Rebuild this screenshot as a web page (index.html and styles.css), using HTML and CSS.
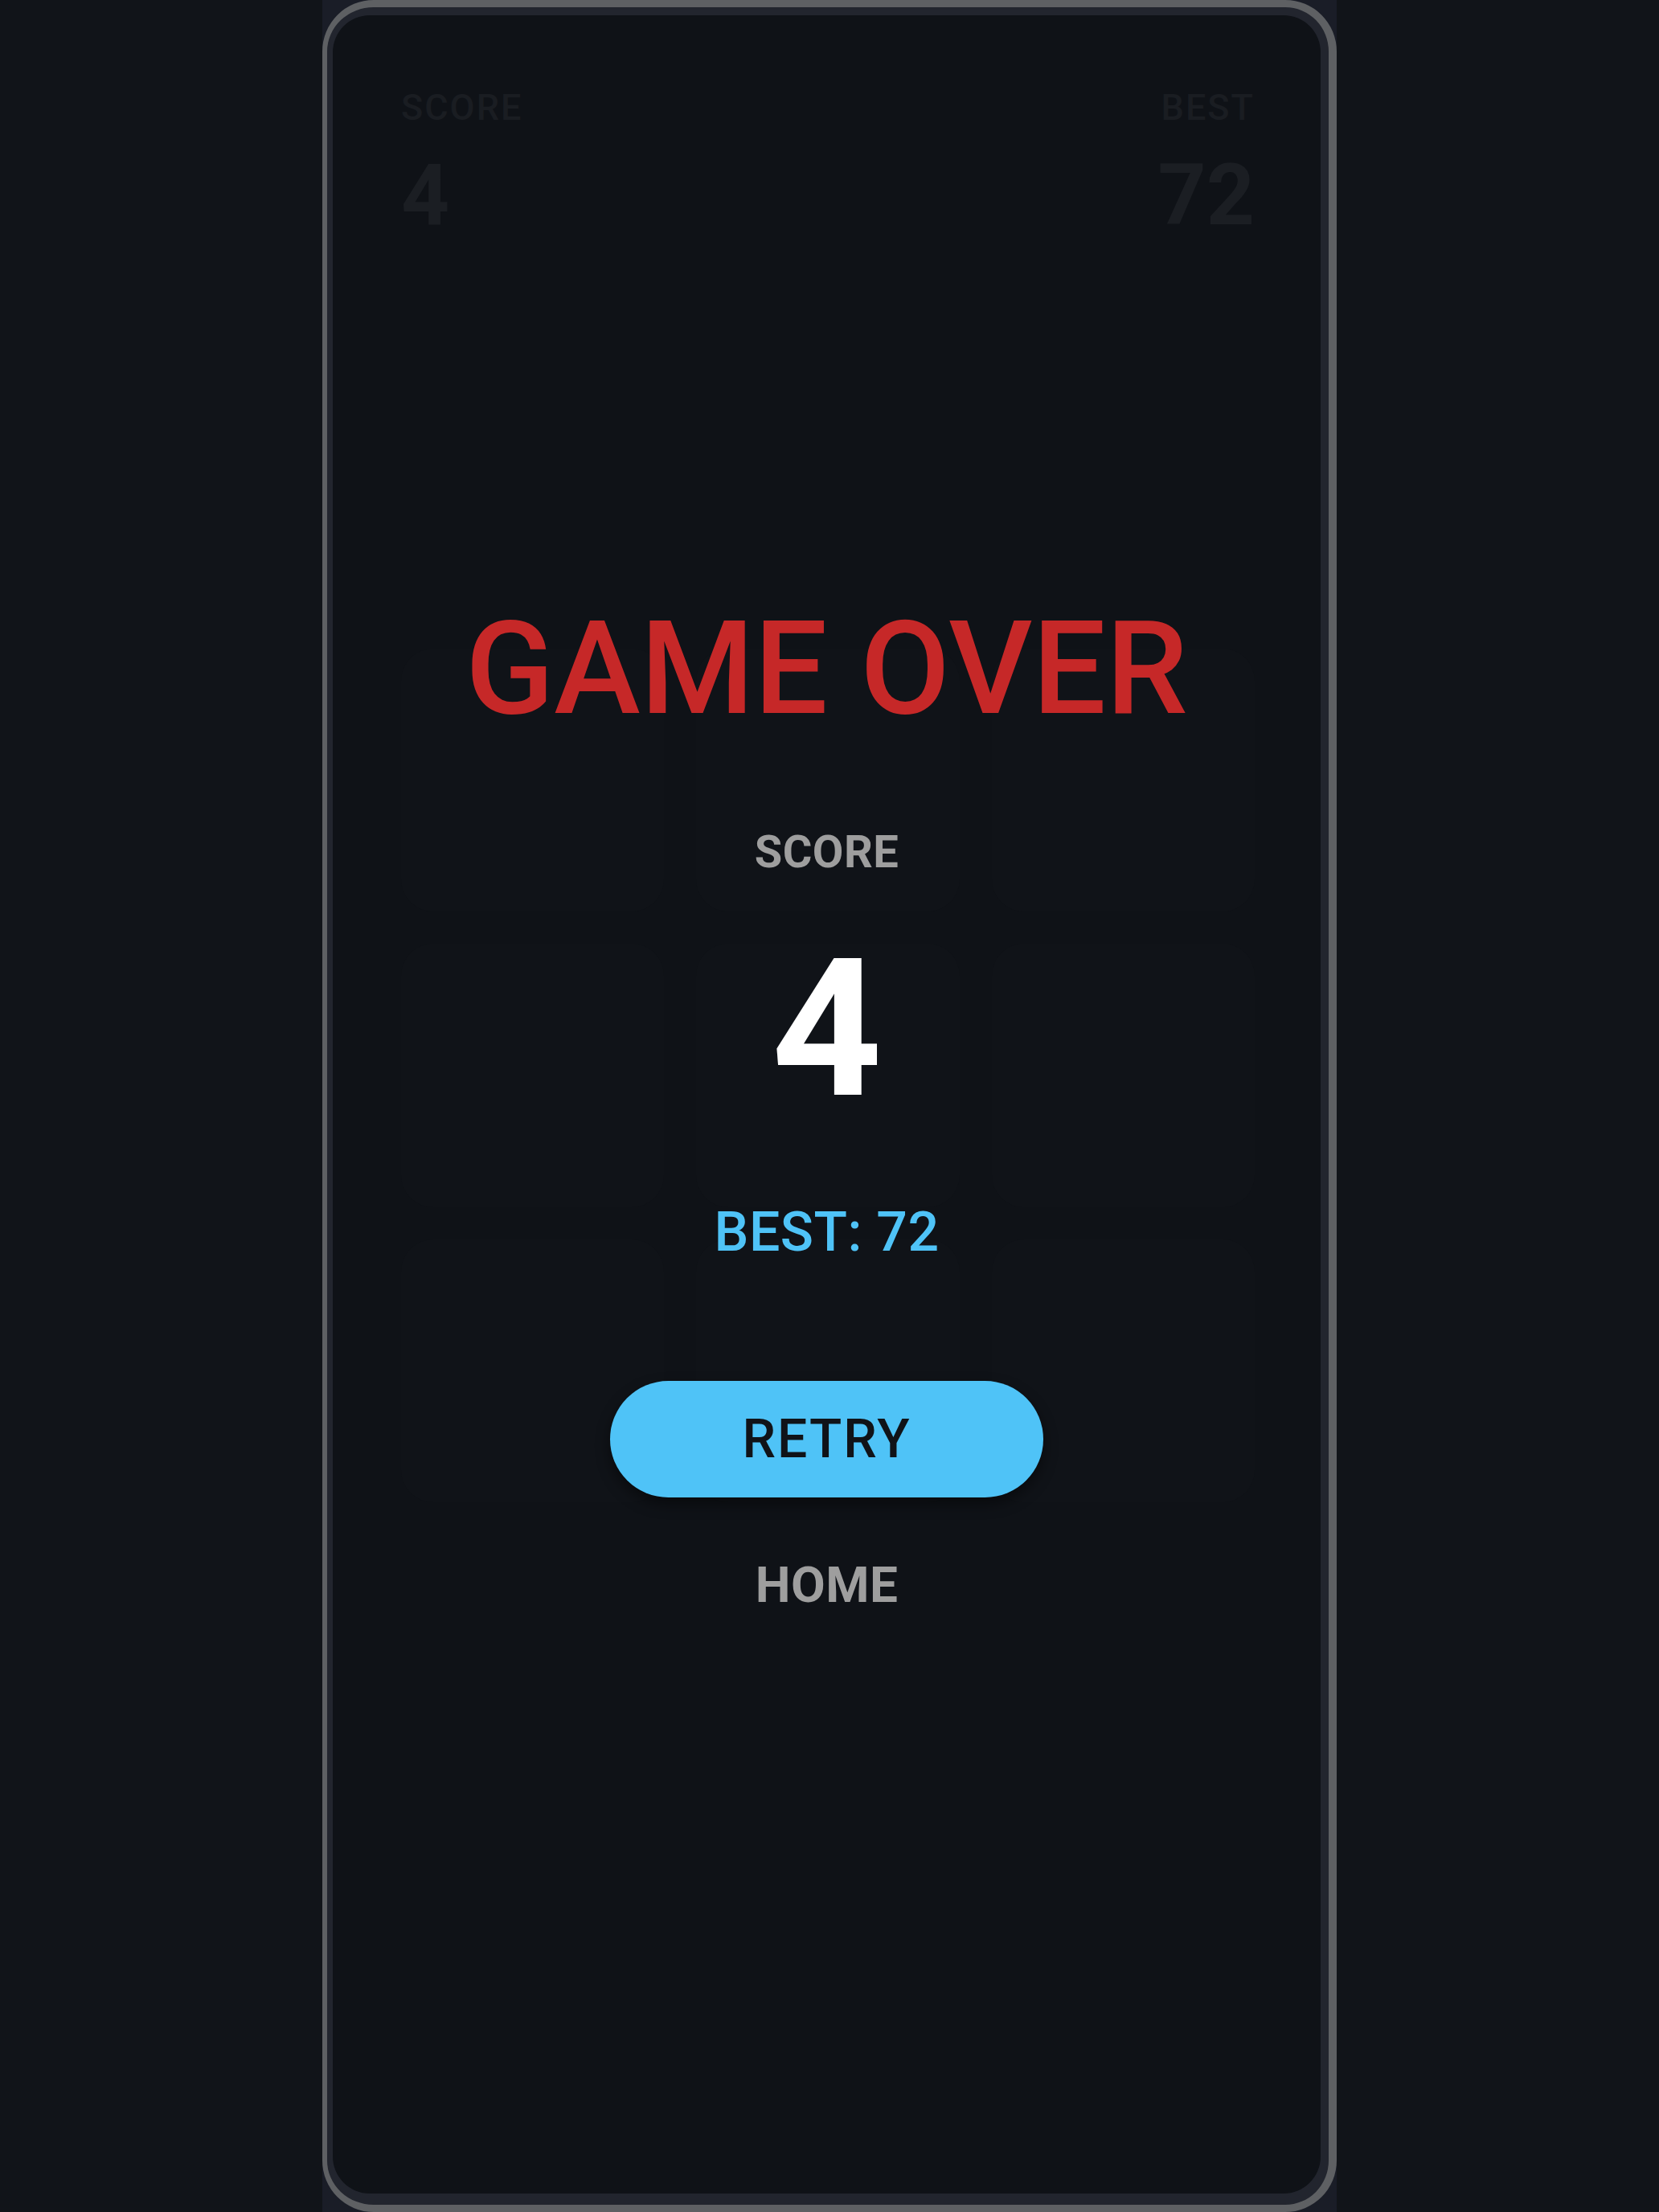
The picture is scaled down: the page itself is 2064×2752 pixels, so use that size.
FILE: index.html
```html
<!DOCTYPE html>
<html lang="en">
<head>
<meta charset="utf-8">
<title>Game Over</title>
<link rel="stylesheet" href="styles.css">
</head>
<body>
<div class="stage">
  <div class="phone">
    <div class="screen">
      <header class="scorebar">
        <div class="stat">
          <div class="stat-label">SCORE</div>
          <div class="stat-value">4</div>
        </div>
        <div class="stat stat-right">
          <div class="stat-label">BEST</div>
          <div class="stat-value">72</div>
        </div>
      </header>
      <div class="board">
        <div class="tile"></div><div class="tile"></div><div class="tile"></div>
        <div class="tile"></div><div class="tile"></div><div class="tile"></div>
        <div class="tile"></div><div class="tile"></div><div class="tile"></div>
      </div>
      <div class="overlay">
        <h1 class="title">GAME OVER</h1>
        <div class="final-label">SCORE</div>
        <div class="final-score">4</div>
        <div class="final-best">BEST: 72</div>
        <button class="retry">RETRY</button>
        <button class="home">HOME</button>
      </div>
    </div>
  </div>
</div>
</body>
</html>
```
FILE: styles.css
```css
* { box-sizing: border-box; }
html, body {
  margin: 0;
  padding: 0;
  height: 100%;
}
body {
  background: #111419;
  font-family: Roboto, "Noto Sans", "Liberation Sans", sans-serif;
  display: flex;
  justify-content: center;
}
.stage {
  width: 1262px;
  height: 2752px;
  background: #1a1d27;
  display: flex;
}
.phone {
  flex: 1;
  border-style: solid;
  border-color: #5e6063;
  border-width: 9px 10px 9px 6px;
  border-radius: 64px;
  background: #22252e;
  padding: 10px 10px 14px 7px;
  display: flex;
}
.screen {
  flex: 1;
  position: relative;
  background: #0f1217;
  border-radius: 46px;
  padding: 92px 82px 0 85px;
  display: flex;
  flex-direction: column;
  overflow: hidden;
}
.scorebar {
  display: flex;
  justify-content: space-between;
}
.stat { display: flex; flex-direction: column; }
.stat-right { align-items: flex-end; }
.stat-label {
  font-size: 45px;
  line-height: 1;
  font-weight: 500;
  letter-spacing: 2px;
  color: #1a1d22;
}
.stat-value {
  margin-top: 35px;
  font-size: 105px;
  line-height: 1;
  font-weight: 700;
  color: #1b1e23;
}
.board {
  margin-top: 511px;
  display: grid;
  grid-template-columns: repeat(3, 1fr);
  gap: 40px;
}
.tile {
  aspect-ratio: 1 / 1;
  border-radius: 40px;
  background: #101318;
}
.overlay {
  position: absolute;
  inset: 0;
  display: flex;
  flex-direction: column;
  align-items: center;
  justify-content: center;
  padding-top: 6px;
}
.title {
  margin: 0;
  font-size: 162px;
  line-height: 1;
  font-weight: 500;
  color: #c62828;
  letter-spacing: 0;
}
.final-label {
  margin-top: 119px;
  font-size: 56px;
  line-height: 1;
  font-weight: 700;
  color: #9e9e9e;
  letter-spacing: 0.5px;
}
.final-score {
  margin-top: 72px;
  font-size: 240px;
  line-height: 1;
  font-weight: 700;
  color: #ffffff;
}
.final-best {
  margin-top: 99px;
  font-size: 68px;
  line-height: 1;
  font-weight: 500;
  color: #4fc3f7;
  letter-spacing: 0.5px;
}
.retry {
  margin-top: 151px;
  width: 539px;
  height: 145px;
  border: none;
  border-radius: 73px;
  background: #4fc3f7;
  color: #101318;
  font-family: inherit;
  font-size: 66px;
  font-weight: 500;
  letter-spacing: 2px;
  box-shadow: 0 8px 18px rgba(0, 0, 0, 0.45);
}
.home {
  margin-top: 78px;
  padding: 0;
  border: none;
  background: none;
  font-family: inherit;
  font-size: 62px;
  line-height: 1;
  font-weight: 700;
  color: #9e9e9e;
  letter-spacing: 0.5px;
}
```
